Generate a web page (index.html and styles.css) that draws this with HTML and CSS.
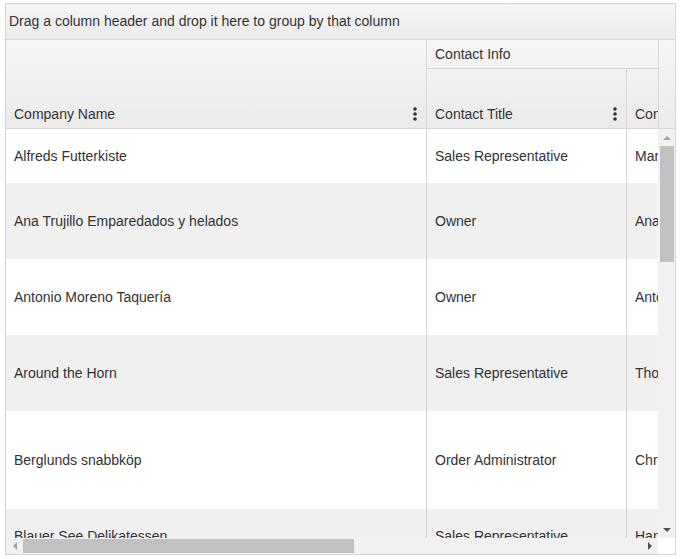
FILE: index.html
```html
<!DOCTYPE html>
<html>
<head>
<meta charset="utf-8">
<link rel="stylesheet" href="styles.css">
</head>
<body>
<div class="grid">
  <div class="groupbar">Drag a column header and drop it here to group by that column</div>
  <div class="header">
    <div class="hclip">
      <div class="hcell company"><span>Company Name</span><svg class="kebab" width="4" height="14" viewBox="0 0 4 14"><circle cx="2" cy="2" r="1.8"/><circle cx="2" cy="7" r="1.8"/><circle cx="2" cy="12" r="1.8"/></svg></div>
      <div class="hgroup">
        <div class="gtitle">Contact Info</div>
        <div class="gsub">
          <div class="hcell title"><span>Contact Title</span><svg class="kebab" width="4" height="14" viewBox="0 0 4 14"><circle cx="2" cy="2" r="1.8"/><circle cx="2" cy="7" r="1.8"/><circle cx="2" cy="12" r="1.8"/></svg></div>
          <div class="hcell name"><span>Contact Name</span></div>
        </div>
      </div>
    </div>
    <div class="hfill"></div>
  </div>
  <div class="bodywrap">
    <div class="rows">
      <div class="row h54"><div class="cell company">Alfreds Futterkiste</div><div class="cell title">Sales Representative</div><div class="cell name">Maria Anders</div></div>
      <div class="row alt h76"><div class="cell company">Ana Trujillo Emparedados y helados</div><div class="cell title">Owner</div><div class="cell name">Ana Trujillo</div></div>
      <div class="row h76"><div class="cell company">Antonio Moreno Taquería</div><div class="cell title">Owner</div><div class="cell name">Antonio Moreno</div></div>
      <div class="row alt h76"><div class="cell company">Around the Horn</div><div class="cell title">Sales Representative</div><div class="cell name">Thomas Hardy</div></div>
      <div class="row h98"><div class="cell company">Berglunds snabbköp</div><div class="cell title">Order Administrator</div><div class="cell name">Christina Berglund</div></div>
      <div class="row alt h54"><div class="cell company">Blauer See Delikatessen</div><div class="cell title">Sales Representative</div><div class="cell name">Hanna Moos</div></div>
    </div>
    <div class="vscroll">
      <div class="vbtn"><span class="arr up"></span></div>
      <div class="vthumb"></div>
      <div class="vspace"></div>
      <div class="vbtn"><span class="arr down"></span></div>
    </div>
  </div>
  <div class="hscrollrow">
    <div class="hscroll">
      <div class="hbtn"><span class="arr left"></span></div>
      <div class="hthumb"></div>
      <div class="hspace"></div>
      <div class="hbtn"><span class="arr right"></span></div>
    </div>
    <div class="corner"></div>
  </div>
</div>
</body>
</html>
```

FILE: styles.css
```css
* { box-sizing: border-box; }
html, body { margin: 0; padding: 0; background: #fff; }
body {
  padding: 3px 0 0 5px;
  font-family: "Liberation Sans", Arial, sans-serif;
  font-size: 14px;
  color: #333;
}
.grid {
  width: 671px;
  height: 552px;
  border: 1px solid #d6d6d6;
  display: flex;
  flex-direction: column;
  overflow: hidden;
}
.groupbar {
  height: 36px;
  flex: none;
  border-bottom: 1px solid #d6d6d6;
  background: linear-gradient(#f6f6f6, #ebebeb);
  padding: 0 3px 2px 3px;
  display: flex;
  align-items: center;
  line-height: 16px;
}
.header {
  height: 89px;
  flex: none;
  display: flex;
  border-bottom: 1px solid #d6d6d6;
  background: linear-gradient(#f6f6f6, #eaeaea);
}
.hclip {
  width: 652px;
  display: flex;
  overflow: hidden;
  flex: none;
}
.hcell {
  display: flex;
  align-items: flex-end;
  justify-content: space-between;
  padding: 0 9px 6px 8px;
  line-height: 16px;
  white-space: nowrap;
  flex: none;
}
.hcell .kebab { fill: #333; margin-bottom: 1px; }
.hcell.company { width: 421px; height: 88px; border-right: 1px solid #d6d6d6; }
.hgroup { width: 231px; flex: none; display: flex; flex-direction: column; }
.gtitle {
  height: 29px;
  border-bottom: 1px solid #d6d6d6;
  padding: 0 8px;
  display: flex;
  align-items: center;
  white-space: nowrap;
}
.gsub { height: 59px; display: flex; }
.hcell.title { width: 200px; height: 59px; border-right: 1px solid #d6d6d6; }
.hcell.name { width: 140px; height: 59px; }
.hfill { width: 17px; flex: none; border-left: 1px solid #d6d6d6; }
.bodywrap { height: 409px; flex: none; display: flex; }
.rows { width: 652px; flex: none; overflow: hidden; }
.row { display: flex; width: 800px; background: #fff; }
.row.alt { background: #f0f0f0; }
.h54 { height: 54px; }
.h76 { height: 76px; }
.h98 { height: 98px; }
.cell {
  display: flex;
  align-items: center;
  padding: 0 8px;
  white-space: nowrap;
  flex: none;
  line-height: 16px;
}
.cell.company { width: 421px; border-right: 1px solid #d6d6d6; }
.cell.title { width: 200px; border-right: 1px solid #d6d6d6; }
.cell.name { width: 170px; }
.vscroll {
  width: 17px;
  flex: none;
  background: #f1f1f1;
  display: flex;
  flex-direction: column;
}
.vbtn { height: 17px; flex: none; display: flex; align-items: center; justify-content: center; }
.vthumb { height: 116px; flex: none; margin: 0 1px 0 2px; background: #c1c1c1; }
.vspace { flex: 1; }
.hscrollrow { height: 16px; flex: none; display: flex; }
.hscroll { width: 652px; flex: none; background: #f1f1f1; display: flex; }
.hbtn { width: 17px; flex: none; display: flex; align-items: center; justify-content: center; }
.hthumb { width: 331px; flex: none; margin: 1px 0; background: #c1c1c1; }
.hspace { flex: 1; }
.corner { flex: 1; background: #fff; }
.arr { width: 0; height: 0; border-style: solid; display: block; }
.arr.up { border-width: 0 4px 4px 4px; border-color: transparent transparent #a3a3a3 transparent; }
.arr.down { border-width: 4px 4px 0 4px; border-color: #505050 transparent transparent transparent; }
.arr.left { border-width: 4px 4px 4px 0; border-color: transparent #a3a3a3 transparent transparent; }
.arr.right { border-width: 4px 0 4px 4px; border-color: transparent transparent transparent #505050; }
```
